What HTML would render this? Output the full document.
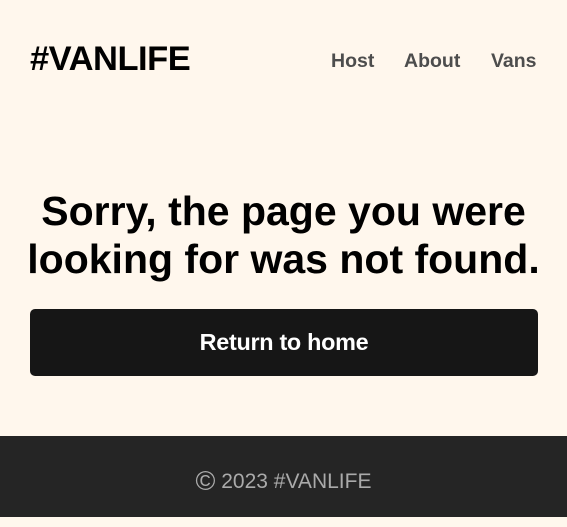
<!DOCTYPE html>
<html><head><meta charset="utf-8"><style>
html,body{margin:0;padding:0}
body{width:567px;height:517px;background:#FFF7ED;font-family:"Liberation Sans",Arial,sans-serif;position:relative;overflow:hidden}
.logo{position:absolute;left:30px;top:40px;font-size:34.5px;font-weight:900;color:#000;letter-spacing:-0.5px}
nav{position:absolute;top:50px;font-size:19.5px;font-weight:bold;color:#4d4d4d}
nav span{position:absolute;white-space:nowrap}
h1{position:absolute;left:0;width:567px;top:187px;margin:0;text-align:center;font-size:41px;line-height:48px;font-weight:bold;color:#000}
.btn{position:absolute;left:30px;top:309px;width:508px;height:67px;background:#161616;border-radius:5px;color:#fff;font-size:23.4px;font-weight:bold;text-align:center;line-height:67px;letter-spacing:-0.3px}
footer{position:absolute;left:0;top:436px;width:567px;height:81px;background:#252525;color:#aaa;font-size:21px;text-align:center;line-height:90px}
footer .c{font-size:27px;vertical-align:-2px}
</style></head><body>
<div class="logo">#VANLIFE</div>
<nav><span style="left:331px">Host</span><span style="left:404px">About</span><span style="left:491px">Vans</span></nav>
<h1>Sorry, the page you were<br>looking for was not found.</h1>
<div class="btn">Return to home</div>
<footer><span class="c">©</span> 2023 #VANLIFE</footer>
</body></html>
